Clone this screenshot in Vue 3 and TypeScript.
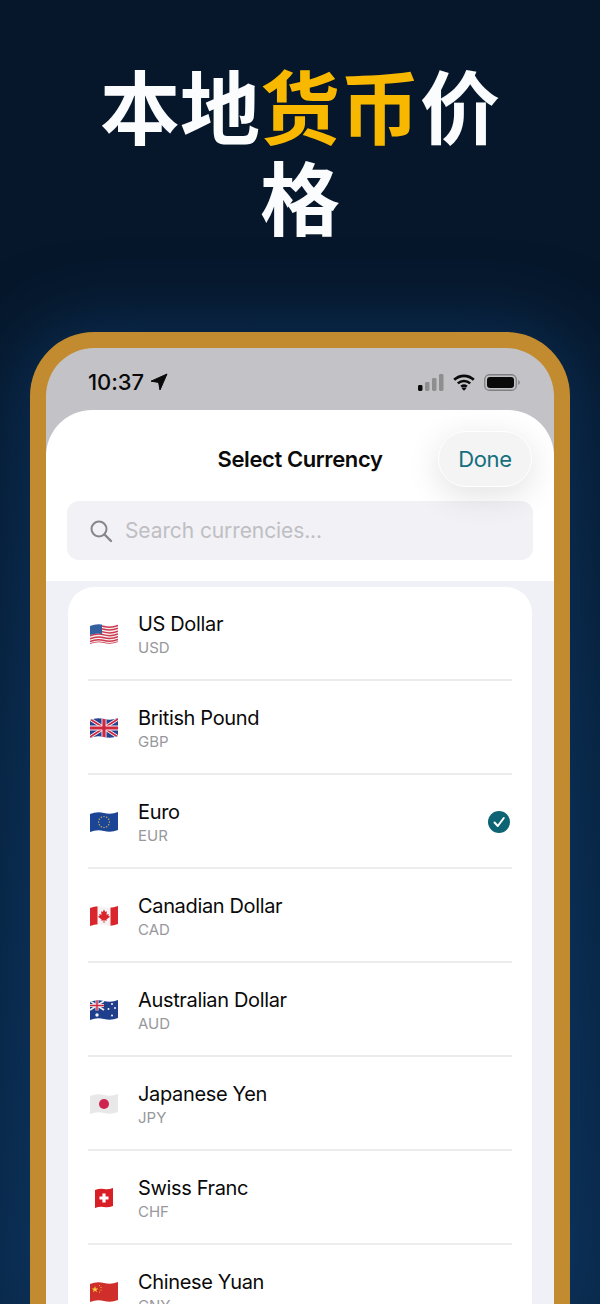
<script setup lang="ts">
interface Currency {
  name: string;
  code: string;
  selected?: boolean;
}

const currencies: Currency[] = [
  { name: 'US Dollar', code: 'USD' },
  { name: 'British Pound', code: 'GBP' },
  { name: 'Euro', code: 'EUR', selected: true },
  { name: 'Canadian Dollar', code: 'CAD' },
  { name: 'Australian Dollar', code: 'AUD' },
  { name: 'Japanese Yen', code: 'JPY' },
  { name: 'Swiss Franc', code: 'CHF' },
  { name: 'Chinese Yuan', code: 'CNY' },
];

// same wave as the flag outline, moved down to y
function wave(y: number) {
  return `M0 ${y} Q7 ${y - 3} 14 ${y - 1} T28 ${y - 2}`;
}

const usStripes = [4.5, 7.3, 10.1, 12.9, 15.7, 18.5, 21];
const euStars = Array.from({ length: 12 }, (_, i) => {
  const a = (i * Math.PI) / 6;
  return { x: 14 + 5.4 * Math.cos(a), y: 11 + 5.4 * Math.sin(a) };
});
</script>

<template>
  <div class="page">
    <h1 class="title">本地<span class="accent">货币</span>价格</h1>

    <div class="phone">
      <div class="status">
        <div class="clock">
          <span>10:37</span>
          <svg width="18" height="18" viewBox="0 0 18 18">
            <path d="M17 1 1 8.2 8.6 9.4 10 17Z" fill="#0a0a0a" stroke="#0a0a0a" stroke-width="1" stroke-linejoin="round" />
          </svg>
        </div>
        <div class="status-icons">
          <svg width="26" height="17" viewBox="0 0 26 17">
            <rect x="0" y="11" width="4.5" height="6" rx="1.4" fill="#0a0a0a" />
            <rect x="7" y="8" width="4.5" height="9" rx="1.4" fill="#8e8e90" />
            <rect x="14" y="4" width="4.5" height="13" rx="1.4" fill="#8e8e90" />
            <rect x="21" y="0" width="4.5" height="17" rx="1.4" fill="#8e8e90" />
          </svg>
          <svg width="22" height="17" viewBox="0 0 22 17" fill="none" stroke="#0a0a0a" stroke-width="2.6">
            <path d="M1.2 5.8C6.8.6 15.2.6 20.8 5.8" />
            <path d="M4.8 9.4c3.6-3.2 8.8-3.2 12.4 0" />
            <path d="M8.2 12.8c1.6-1.3 4-1.3 5.6 0" />
            <path d="M11 16.8 8.6 14.2c1.4-1 3.4-1 4.8 0Z" fill="#0a0a0a" stroke="none" />
          </svg>
          <svg width="36" height="17" viewBox="0 0 36 17">
            <rect x="0.75" y="0.75" width="31.5" height="15.5" rx="4.6" fill="none" stroke="#7f7f81" stroke-width="1.3" />
            <rect x="3" y="3" width="27" height="11" rx="3" fill="#0a0a0a" />
            <path d="M34 6v5c1.2-.4 2-1.4 2-2.500s-.8-2.100-2-2.500Z" fill="#8e8e90" />
          </svg>
        </div>
      </div>

      <div class="sheet">
        <div class="sheet-top">
          <div class="sheet-header">
            <span class="sheet-title">Select Currency</span>
            <button class="done">Done</button>
          </div>
          <div class="search">
            <svg width="24" height="24" viewBox="0 0 24 24" fill="none" stroke="#87878b" stroke-width="2">
              <circle cx="10" cy="10" r="7.500" />
              <path d="M15.500 15.500 22 22" stroke-linecap="round" stroke-width="2.400" />
            </svg>
            <span class="search-text">Search currencies...</span>
          </div>
        </div>

        <div class="list-area">
          <svg class="flag-defs" width="0" height="0">
            <defs>
              <clipPath id="wave-flag">
                <path d="M0 3Q7 0 14 2T28 1V19Q21 22 14 20T0 21Z" />
              </clipPath>
              <clipPath id="wave-square">
                <path d="M5 3Q10 1 14 2T23 1V19Q18 21 14 20T5 21Z" />
              </clipPath>
            </defs>
          </svg>

          <div class="card">
            <div v-for="c in currencies" :key="c.code" class="row">
              <svg class="flag" width="28" height="22" viewBox="0 0 28 22">
                <g v-if="c.code === 'USD'" clip-path="url(#wave-flag)">
                  <rect width="28" height="22" fill="#f4f1f1" />
                  <path v-for="y in usStripes" :key="y" :d="wave(y)" fill="none" stroke="#cf3a50" stroke-width="1.500" />
                  <path d="M0 0H12V11Q7 9.500 0 12Z" fill="#35609f" />
                </g>

                <g v-else-if="c.code === 'GBP'" clip-path="url(#wave-flag)">
                  <rect width="28" height="22" fill="#27408f" />
                  <path d="M0 2 28 20M0 20 28 2" stroke="#f3f3f3" stroke-width="3.400" />
                  <path d="M0 2 28 20M0 20 28 2" stroke="#cf2640" stroke-width="1.600" />
                  <path d="M14 0V22M0 11H28" stroke="#f3f3f3" stroke-width="5" />
                  <path d="M14 0V22M0 11H28" stroke="#cf2640" stroke-width="3.200" />
                </g>

                <g v-else-if="c.code === 'EUR'" clip-path="url(#wave-flag)">
                  <rect width="28" height="22" fill="#1c4596" />
                  <circle v-for="(s, i) in euStars" :key="i" :cx="s.x" :cy="s.y" r="0.700" fill="#cdb95a" />
                </g>

                <g v-else-if="c.code === 'CAD'" clip-path="url(#wave-flag)">
                  <rect width="28" height="22" fill="#f5f3f3" />
                  <rect width="7.500" height="22" fill="#d9252b" />
                  <rect x="20.500" width="7.500" height="22" fill="#d9252b" />
                  <path d="M14 4.500 15.300 7 17 6.300 16.400 9.700 18.800 9 18.300 10.800 20 11.800 16.400 14.500 16.800 15.700 14.400 15.300V18H13.600V15.300L11.200 15.700 11.600 14.500 8 11.800 9.700 10.800 9.200 9 11.600 9.700 11 6.300 12.700 7Z" fill="#d9252b" />
                </g>

                <g v-else-if="c.code === 'AUD'" clip-path="url(#wave-flag)">
                  <rect width="28" height="22" fill="#1f3f8c" />
                  <path d="M0 2 14 11M0 11 14 2" stroke="#f1eef0" stroke-width="1.800" />
                  <path d="M7 0V11.500M0 6.500H14" stroke="#f1eef0" stroke-width="3" />
                  <path d="M7 0V11.500M0 6.500H14" stroke="#d2283f" stroke-width="1.500" />
                  <circle cx="7" cy="16" r="1.700" fill="#f4f4f4" />
                  <circle cx="22" cy="5" r="1" fill="#f4f4f4" />
                  <circle cx="18.500" cy="10" r="1" fill="#f4f4f4" />
                  <circle cx="25" cy="9" r="1" fill="#f4f4f4" />
                  <circle cx="22" cy="16.500" r="1" fill="#f4f4f4" />
                </g>

                <g v-else-if="c.code === 'JPY'" clip-path="url(#wave-flag)">
                  <rect width="28" height="22" fill="#e8e8e8" />
                  <circle cx="14" cy="11" r="5" fill="#cf2450" />
                </g>

                <g v-else-if="c.code === 'CHF'" clip-path="url(#wave-square)">
                  <rect width="28" height="22" fill="#d91f26" />
                  <path d="M14 6.500V15.500M9.500 11H18.500" stroke="#fff" stroke-width="3.200" />
                </g>

                <g v-else clip-path="url(#wave-flag)">
                  <rect width="28" height="22" fill="#cf2e2a" />
                  <path d="M5 5 5.800 7.400H8.300L6.300 8.900 7 11.300 5 9.800 3 11.300 3.700 8.900 1.700 7.400H4.200Z" fill="#f6d13a" />
                  <circle cx="9.500" cy="4.500" r="0.600" fill="#f6d13a" />
                  <circle cx="11" cy="6.500" r="0.600" fill="#f6d13a" />
                  <circle cx="11" cy="9" r="0.600" fill="#f6d13a" />
                  <circle cx="9.500" cy="11" r="0.600" fill="#f6d13a" />
                </g>
              </svg>

              <div class="names">
                <span class="name">{{ c.name }}</span>
                <span class="code">{{ c.code }}</span>
              </div>

              <svg v-if="c.selected" class="check" width="22" height="22" viewBox="0 0 22 22">
                <circle cx="11" cy="11" r="11" fill="#0e6475" />
                <path d="M6.500 11.500 9.800 15 15.800 7" fill="none" stroke="#fff" stroke-width="2" stroke-linecap="round" stroke-linejoin="round" />
              </svg>
            </div>
          </div>
        </div>
      </div>
    </div>
  </div>
</template>

<style>
html,
body {
  margin: 0;
  background: #06172b;
}
</style>

<style scoped>
.page {
  height: 1304px;
  overflow: hidden;
  display: flex;
  flex-direction: column;
  align-items: center;
  background: linear-gradient(180deg, #06172b 0%, #06172b 22%, #08233f 62%, #0a2949 100%);
  font-family: Inter, 'Noto Sans', sans-serif;
}

.title {
  box-sizing: border-box;
  width: 440px;
  height: 332px;
  flex-shrink: 0;
  margin: 0;
  padding-top: 58px;
  text-align: center;
  font-family: 'Noto Sans CJK SC', sans-serif;
  font-size: 80px;
  line-height: 91px;
  font-weight: 600;
  color: #fbfcfe;
}

.accent {
  color: #f9b800;
}

.phone {
  box-sizing: border-box;
  width: 540px;
  flex: 1;
  min-height: 0;
  display: flex;
  flex-direction: column;
  border: 16px solid #c28b2f;
  border-bottom: none;
  border-radius: 64px 64px 0 0;
  background: #c3c3c7;
  box-shadow: 0 0 70px 10px rgba(16, 66, 120, 0.5);
  overflow: hidden;
}

.status {
  height: 62px;
  flex-shrink: 0;
  display: flex;
  align-items: center;
  justify-content: space-between;
  padding: 6px 34px 0 42px;
  box-sizing: border-box;
}

.clock {
  display: flex;
  align-items: center;
  gap: 6px;
  font-size: 22px;
  font-weight: 500;
  letter-spacing: -0.1px;
  color: #0a0a0a;
}

.status-icons {
  display: flex;
  align-items: center;
  gap: 9px;
}

.status-icons svg {
  display: block;
}

.sheet {
  flex: 1;
  min-height: 0;
  display: flex;
  flex-direction: column;
  background: #fff;
  border-radius: 46px 46px 0 0;
}

.sheet-top {
  padding: 21px;
}

.sheet-header {
  display: grid;
  grid-template-columns: 1fr auto 1fr;
  align-items: center;
  height: 56px;
}

.sheet-title {
  grid-column: 2;
  font-size: 22px;
  font-weight: 600;
  letter-spacing: -0.4px;
  color: #0a0a0a;
  white-space: nowrap;
}

.done {
  grid-column: 3;
  justify-self: end;
  width: 94px;
  height: 56px;
  margin-right: 1px;
  box-sizing: border-box;
  border: 1.500px solid #fff;
  border-radius: 28px;
  background: #f4f4f5;
  box-shadow: 0 8px 34px rgba(0, 0, 0, 0.12);
  color: #156f7e;
  font-family: inherit;
  font-size: 22px;
  font-weight: 400;
  letter-spacing: -0.3px;
  padding: 0;
}

.search {
  margin-top: 14px;
  height: 59px;
  display: flex;
  align-items: center;
  gap: 12px;
  padding-left: 22px;
  background: #f1f1f6;
  border-radius: 12px;
}

.search-text {
  font-size: 21px;
  letter-spacing: -0.1px;
  color: #bfbfc3;
  white-space: nowrap;
}

.list-area {
  flex: 1;
  min-height: 0;
  padding: 6px 22px 0;
  background: #f0f0f7;
}

.flag-defs {
  display: block;
}

.card {
  background: #fff;
  border-radius: 26px 26px 0 0;
  padding: 0 20px;
}

.row {
  box-sizing: border-box;
  height: 94px;
  display: flex;
  align-items: center;
  border-bottom: 2px solid #ececef;
}

.flag {
  flex-shrink: 0;
  margin: 2px 20px 0 2px;
}

.names {
  flex: 1;
  display: flex;
  flex-direction: column;
  padding-top: 4px;
}

.name {
  font-size: 20px;
  line-height: 26px;
  letter-spacing: -0.35px;
  color: #0a0a0a;
}

.code {
  font-size: 15px;
  line-height: 22px;
  color: #98989c;
}

.check {
  flex-shrink: 0;
  margin: 2px 2px 0 0;
}
</style>
